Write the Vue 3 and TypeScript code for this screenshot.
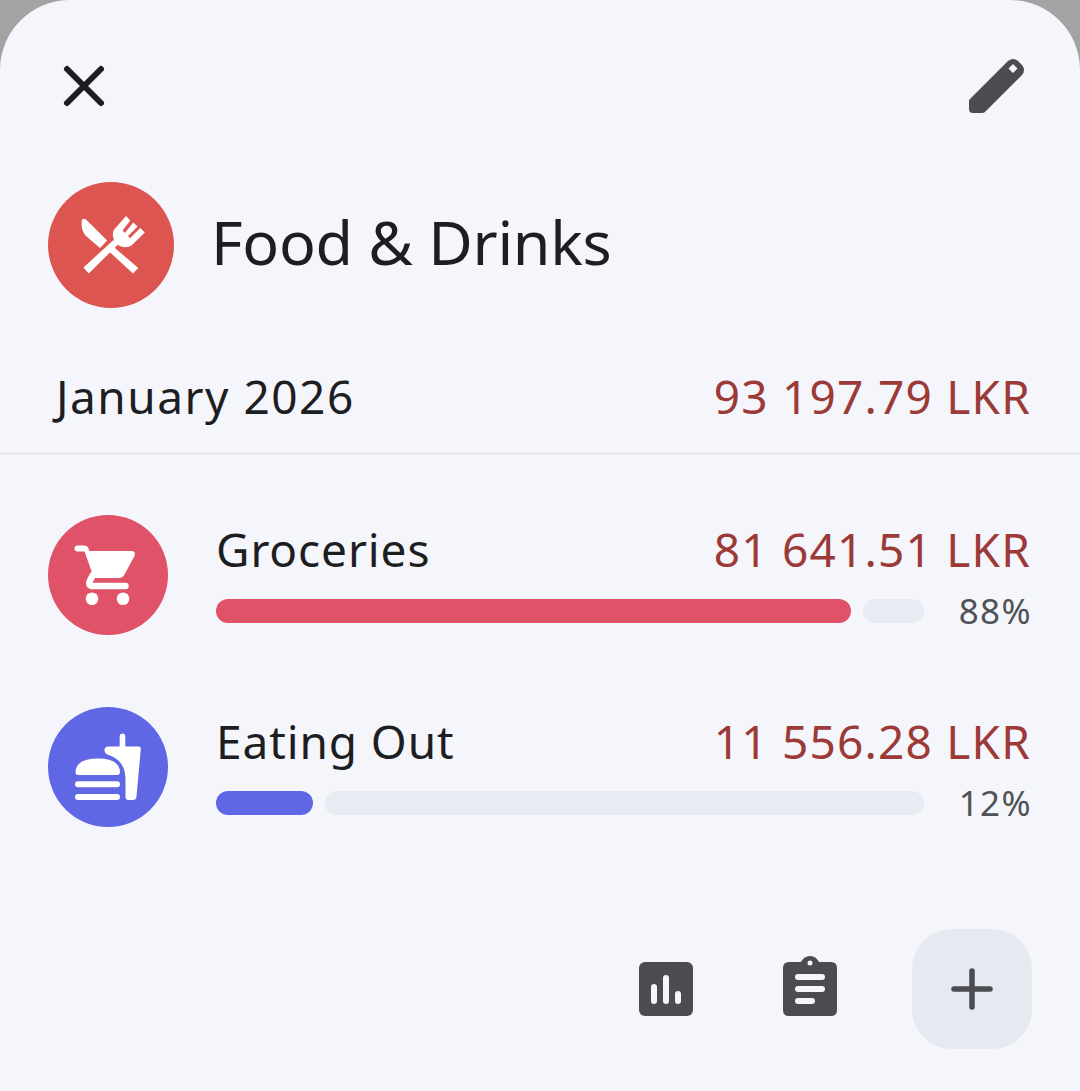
<script setup lang="ts">
interface Row {
  name: string
  amount: string
  pct: string
  color: string
  fill: number
}
const rows: Row[] = [
  { name: 'Groceries', amount: '81 641.51 LKR', pct: '88%', color: '#e05268', fill: 635 },
  { name: 'Eating Out', amount: '11 556.28 LKR', pct: '12%', color: '#6067e5', fill: 97 }
]
</script>

<template>
  <main class="card">
    <header class="top">
      <button class="plain" aria-label="Close">
        <svg width="44" height="44" viewBox="62 64 44 44">
          <path d="M67 69 L101 103 M101 69 L67 103" fill="none" stroke="#1c1d21" stroke-width="6" stroke-linecap="round" />
        </svg>
      </button>
      <button class="plain" aria-label="Edit">
        <svg width="58" height="58" viewBox="967 57 58 58">
          <path fill-rule="evenodd" fill="#4b4c51" d="M1008 61 Q1013 57 1018 61 L1022 65 Q1026 70 1022 75 L985 112 Q984 113 982 113 L973 113 Q969 113 969 109 L969 101 Q969 100 970 99 Z M1013 64 L1008.500 68.500 L1013 73 L1017.500 68.500 Z" />
        </svg>
      </button>
    </header>

    <section class="title-row">
      <div class="circle big">
        <svg width="126" height="126" viewBox="48 182 126 126">
          <g fill="#fff">
            <path d="M81.800 220.500 Q80.500 230 86 236 L100 248 L107.200 240.500 L86 219.500 Q82.500 217.500 81.800 220.500 Z" />
            <path d="M112 245.500 L138.300 268 L133 273.500 L108 250.500 Z" />
            <path d="M83.500 267.500 L88.700 273.500 L118 244.500 L113.500 240 Z" />
            <path d="M112.800 235 Q112.500 231 115.500 228 L126 216 L130.300 220.500 L122.500 230.500 L124.800 233 L133.300 222.500 L137.600 226.500 L128 236 L130 238.300 L140.300 228 L144.800 232.500 L131.500 245.500 Q127 248.500 121 246.500 Q113.500 243.500 112.800 235 Z" />
          </g>
        </svg>
      </div>
      <h1>Food &amp; Drinks</h1>
    </section>

    <section class="month">
      <span class="month-name">January 2026</span>
      <span class="amount">93 197.79 LKR</span>
    </section>

    <section class="list">
      <article v-for="(row, i) in rows" :key="row.name" class="row">
        <div class="circle" :style="{ background: row.color }">
          <svg v-if="i === 0" width="120" height="120" viewBox="48 515 120 120">
            <g fill="#fff">
              <path d="M77.500 545.500 L84 545.500 Q87.500 545.500 88.500 548.500 L89.300 551 L131.500 551 Q136 551 134.500 556 L124.500 574.500 Q122.500 578 119 578 L94 578 L84.500 551.500 L77.500 551.500 A3 3 0 0 1 77.500 545.500 Z" />
              <circle cx="92" cy="598.700" r="6.300" />
              <circle cx="123" cy="598.700" r="6.300" />
            </g>
            <path d="M93 575 L90 580.500 Q87.500 586 93 586 L125.500 586" fill="none" stroke="#fff" stroke-width="6.500" stroke-linecap="round" />
          </svg>
          <svg v-else width="120" height="120" viewBox="48 707 120 120">
            <g fill="#fff">
              <path d="M75.500 772 Q76 758.500 98 758.500 Q119.500 758.500 120 772 Q120 775 117 775 L78 775 Q75.500 775 75.500 772 Z" />
              <rect x="75" y="781.300" width="45" height="6" rx="3" />
              <rect x="75" y="794" width="45" height="6" rx="3" />
              <path d="M119.700 736.500 Q119.700 733.500 122.500 733.500 Q125.300 733.500 125.300 736.500 L125.300 746.500 L138.500 746.500 Q141 746.500 140.800 749 L136.500 796.500 Q136.200 800 133 800 L128.500 800 Q125.500 800 125.500 797 L125.500 778 Q125 760 107.500 754.500 Q104.500 753 104.500 750 Q104.500 746.500 108.500 746.500 L119.700 746.500 Z" />
            </g>
          </svg>
        </div>
        <div class="info">
          <div class="line">
            <span class="name">{{ row.name }}</span>
            <span class="amount">{{ row.amount }}</span>
          </div>
          <div class="progress">
            <div class="bar">
              <span class="fill" :style="{ width: row.fill + 'px', background: row.color }"></span>
              <span class="track"></span>
            </div>
            <span class="pct">{{ row.pct }}</span>
          </div>
        </div>
      </article>
    </section>

    <footer class="actions">
      <button class="plain" aria-label="Statistics">
        <svg width="54" height="54" viewBox="639 962 54 54">
          <rect x="639" y="962" width="54" height="54" rx="6" fill="#4b4c51" />
          <g stroke="#f5f6fb" stroke-width="6" stroke-linecap="round">
            <path d="M654 987 V1001" />
            <path d="M666 978 V1001" />
            <path d="M678 994 V1001" />
          </g>
        </svg>
      </button>
      <button class="plain" aria-label="Notes">
        <svg width="54" height="60" viewBox="783 956 54 60">
          <path fill="#4b4c51" d="M789 962 L801 962 Q804 956 810 956 Q816 956 819 962 L831 962 Q837 962 837 968 L837 1010 Q837 1016 831 1016 L789 1016 Q783 1016 783 1010 L783 968 Q783 962 789 962 Z" />
          <circle cx="810" cy="963" r="2.500" fill="#f5f6fb" />
          <g stroke="#f5f6fb" stroke-width="6" stroke-linecap="round">
            <path d="M798 977 H822" />
            <path d="M798 989 H822" />
            <path d="M798 1001 H812" />
          </g>
        </svg>
      </button>
      <button class="add" aria-label="Add">
        <svg width="44" height="44" viewBox="950 967 44 44">
          <path d="M954 989 H990 M972 971 V1007" fill="none" stroke="#4b4c51" stroke-width="5.500" stroke-linecap="round" />
        </svg>
      </button>
    </footer>
  </main>
</template>

<style scoped>
.card {
  box-sizing: border-box;
  width: 1080px;
  height: 1091px;
  background: #f5f6fb;
  border-radius: 70px 70px 0 0;
  font-family: "Noto Sans", "Open Sans", sans-serif;
  color: #1d1e22;
  overflow: hidden;
}
.plain {
  display: flex;
  padding: 0;
  border: 0;
  background: none;
}
.top {
  display: flex;
  justify-content: space-between;
  align-items: center;
  height: 58px;
  padding: 57px 55px 0 62px;
}
.title-row {
  display: flex;
  align-items: center;
  gap: 37px;
  margin: 67px 0 0 48px;
}
.circle {
  flex: none;
  width: 120px;
  height: 120px;
  border-radius: 50%;
  display: flex;
}
.circle.big {
  width: 126px;
  height: 126px;
  background: #dd5550;
}
h1 {
  margin: 0 0 6px;
  font-size: 61px;
  font-weight: 400;
  line-height: 84px;
  letter-spacing: -0.3px;
}
.month {
  display: flex;
  justify-content: space-between;
  align-items: flex-start;
  height: 86px;
  margin-top: 42px;
  padding: 16px 49px 0 56px;
  border-bottom: 3px solid #e9ebf1;
}
.month-name,
.amount,
.name {
  font-size: 46px;
  line-height: 60px;
  font-weight: 400;
}
.month-name {
  letter-spacing: 1.5px;
}
.amount {
  color: #9c3a38;
  letter-spacing: 1.2px;
}
.name {
  letter-spacing: 0.9px;
}
.list {
  display: flex;
  flex-direction: column;
  gap: 72px;
  margin-top: 60px;
  padding: 0 49px 0 48px;
}
.row {
  display: flex;
  gap: 48px;
  height: 120px;
}
.info {
  flex: 1;
  min-width: 0;
}
.line {
  display: flex;
  justify-content: space-between;
  height: 84px;
}
.line span {
  margin-top: 4px;
}
.progress {
  display: flex;
  align-items: center;
  height: 24px;
  gap: 32px;
}
.bar {
  display: flex;
  gap: 12px;
  width: 708px;
  flex: none;
}
.fill,
.track {
  display: block;
  height: 24px;
  border-radius: 12px;
}
.track {
  flex: 1;
  background: #e8ebf2;
}
.pct {
  flex: 1;
  margin-right: -1px;
  text-align: right;
  font-size: 35px;
  line-height: 24px;
  font-weight: 400;
  color: #505257;
  letter-spacing: 1.4px;
  white-space: nowrap;
}
.actions {
  display: flex;
  justify-content: flex-end;
  align-items: center;
  gap: 90px;
  margin-top: 102px;
  padding-right: 48px;
}
.actions .plain {
  align-self: flex-end;
  margin-bottom: 33px;
}
.add {
  display: flex;
  align-items: center;
  justify-content: center;
  width: 120px;
  height: 120px;
  margin-left: -15px;
  padding: 0;
  border: 0;
  border-radius: 40px;
  background: #e7e9f0;
}
</style>

<style>
html,
body {
  background: #a3a3a3;
}
</style>
